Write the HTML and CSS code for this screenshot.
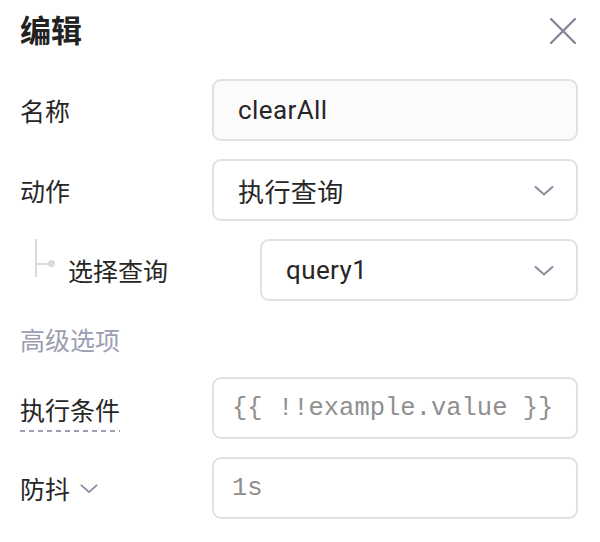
FILE: index.html
```html
<!DOCTYPE html>
<html lang="zh-CN">
<head>
<meta charset="utf-8">
<link rel="stylesheet" href="styles.css">
</head>
<body>
<div class="panel">
  <div class="header">
    <h1 class="title">编辑</h1>
    <svg class="close" width="26" height="26" viewBox="0 0 26 26"><path d="M1 1L25 25M25 1L1 25" stroke="#7f8396" stroke-width="2.2" fill="none" stroke-linecap="round"/></svg>
  </div>
  <div class="form">
    <div class="row">
      <div class="label">名称</div>
      <div class="field filled"><span class="value">clearAll</span></div>
    </div>
    <div class="row">
      <div class="label">动作</div>
      <div class="field select"><span class="value">执行查询</span>
        <svg class="chev" width="20" height="11" viewBox="0 0 20 11"><path d="M1 1.5L10 9.5L19 1.5" stroke="#868a9c" stroke-width="2" fill="none"/></svg>
      </div>
    </div>
    <div class="row sub">
      <div class="label tree">
        <span class="branch"><span class="dot"></span></span>
        <span>选择查询</span>
      </div>
      <div class="field select"><span class="value">query1</span>
        <svg class="chev" width="20" height="11" viewBox="0 0 20 11"><path d="M1 1.5L10 9.5L19 1.5" stroke="#868a9c" stroke-width="2" fill="none"/></svg>
      </div>
    </div>
    <div class="section">高级选项</div>
    <div class="row">
      <div class="label"><span class="dashed">执行条件</span></div>
      <div class="field mono"><span class="placeholder">{{ !!example.value }}</span></div>
    </div>
    <div class="row">
      <div class="label">防抖
        <svg class="chev small" width="20" height="11" viewBox="0 0 20 11"><path d="M1 1.5L10 9.5L19 1.5" stroke="#868a9c" stroke-width="2" fill="none"/></svg>
      </div>
      <div class="field mono"><span class="placeholder">1s</span></div>
    </div>
  </div>
</div>
</body>
</html>
```
FILE: styles.css
```css
* { box-sizing: border-box; }
html, body { margin: 0; padding: 0; background: #fff; }
body {
  font-family: Roboto, "Noto Sans CJK SC", sans-serif;
  color: #262626;
}
.panel { padding: 0 22px 0 20px; }
.header {
  height: 62px;
  display: flex;
  align-items: center;
  justify-content: space-between;
}
.title {
  margin: 0;
  font-size: 31px;
  font-weight: 700;
  color: #222;
  line-height: 1;
}
.close { margin-right: 2px; }
.form {
  margin-top: 17px;
  display: flex;
  flex-direction: column;
  gap: 18px;
}
.row {
  display: grid;
  grid-template-columns: 192px minmax(0, 1fr);
  height: 62px;
  align-items: center;
}
.row.sub { grid-template-columns: 240px minmax(0, 1fr); }
.label {
  font-size: 25px;
  display: flex;
  align-items: center;
  color: #262626;
}
.tree { position: relative; padding-left: 48px; height: 62px; }
.branch {
  position: absolute;
  left: 15px;
  top: 0;
  width: 2px;
  height: 38px;
  background: #d8dae1;
}
.branch::after {
  content: "";
  position: absolute;
  left: 2px;
  top: 24px;
  width: 12px;
  height: 2px;
  background: #d8dae1;
}
.dot {
  position: absolute;
  left: 13px;
  top: 21px;
  width: 7px;
  height: 7px;
  border-radius: 50%;
  background: #d8dae1;
}
.field {
  height: 62px;
  min-width: 0;
  overflow: hidden;
  border: 2px solid #dfe1e6;
  border-radius: 9px;
  padding: 0 22px 0 24px;
  display: flex;
  align-items: center;
  justify-content: space-between;
  background: #fff;
}
.field.mono { padding-left: 18px; padding-right: 8px; }
.field.filled { background: #fbfbfb; }
.value { font-size: 26px; letter-spacing: 0.4px; color: #262626; }
.placeholder {
  font-family: "Liberation Mono", monospace;
  font-size: 25.5px;
  color: #8f8f8f;
  white-space: nowrap;
}
.chev { flex: none; }
.chev.small { margin-left: 10px; width: 18px; }
.section {
  height: 40px;
  display: flex;
  align-items: center;
  font-size: 25px;
  color: #9c9eb2;
}
.dashed {
  padding-bottom: 5px;
  background: repeating-linear-gradient(to right, #9c9eb2 0 5px, transparent 5px 9px) left bottom / 100% 2px no-repeat;
  margin-top: 7px;
}
```
